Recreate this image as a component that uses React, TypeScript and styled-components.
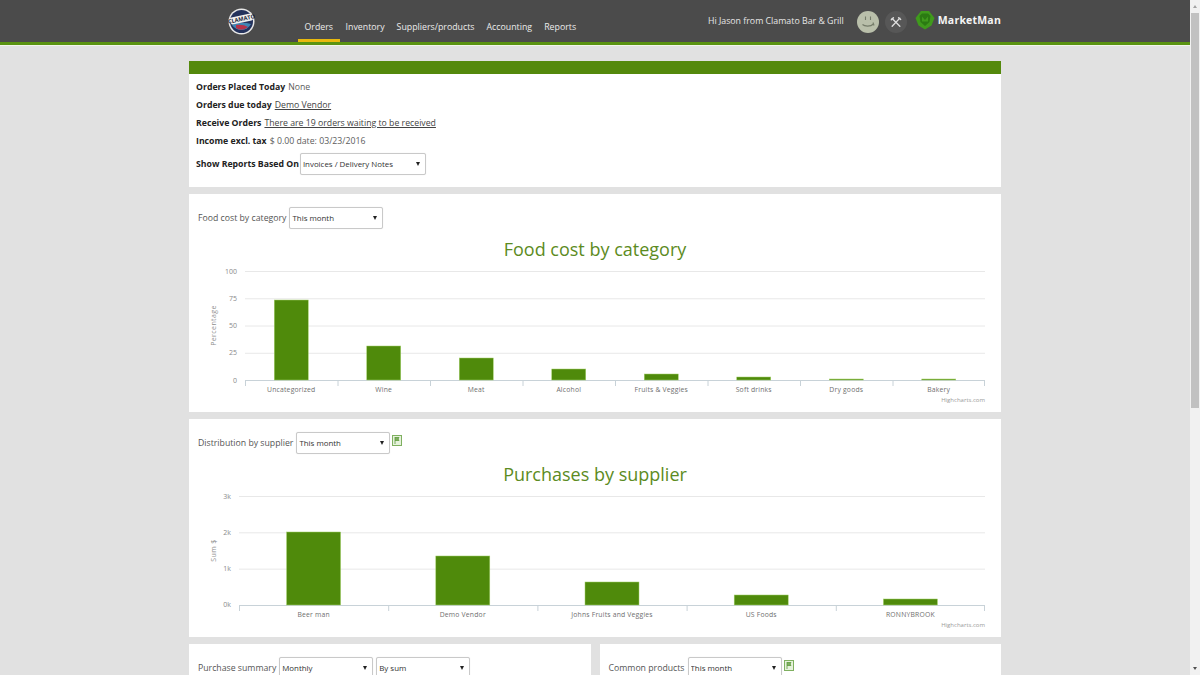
import React from 'react';
import styled, { createGlobalStyle } from 'styled-components';

const GlobalStyle = createGlobalStyle`
  html, body {
    margin: 0;
    padding: 0;
    height: 100%;
    overflow: hidden;
    background: #e1e1e1;
    font-family: "Open Sans", "Liberation Sans", sans-serif;
  }
  * { box-sizing: border-box; }
`;

const Page = styled.div`
  display: flex;
  width: 1200px;
  height: 675px;
  overflow: hidden;
`;

const Main = styled.div`
  flex: 1;
  min-width: 0;
`;

const Header = styled.header`
  height: 45px;
  background: #4b4b4b;
  border-bottom: 3px solid #5a9311;
  box-shadow: 0 1px 0 #f2f5ea;
`;

const HeaderInner = styled.div`
  width: 812px;
  height: 42px;
  margin: 0 auto;
  display: flex;
  align-items: stretch;
  padding-left: 39px;
`;

const LogoSlot = styled.div`
  width: 70px;
  display: flex;
  align-items: flex-start;
  padding-top: 8px;
`;

const Nav = styled.nav`
  display: flex;
`;

const NavItem = styled.a<{ $active?: boolean }>`
  display: flex;
  align-items: center;
  height: 42px;
  padding: 14px ${p => (p.$active ? '6.500px' : '6px')} 0;
  font-size: 8.8px;
  color: #ececec;
  border-bottom: 3px solid ${p => (p.$active ? '#e8b90e' : 'transparent')};
`;

const UserArea = styled.div`
  margin-left: auto;
  display: flex;
  align-items: center;
  height: 42px;
  padding-top: 1px;
`;

const Greeting = styled.span`
  font-size: 8.8px;
  color: #e6e6e6;
  margin: -1px 13px 0 0;
`;

const IconRound = styled.span<{ $bg: string }>`
  width: 22px;
  height: 22px;
  border-radius: 50%;
  background: ${p => p.$bg};
  display: flex;
  align-items: center;
  justify-content: center;
  margin-right: 6px;
`;

const Brand = styled.span`
  display: flex;
  align-items: center;
  gap: 3px;
  margin-left: 2px;
  margin-top: -4px;
  font-size: 10.500px;
  font-weight: 700;
  letter-spacing: 0.2px;
  color: #f4f4f4;
`;

const Content = styled.main`
  width: 812px;
  margin: 0 auto;
  padding-top: 16px;
  display: flex;
  flex-direction: column;
  gap: 7px;
`;

const Card = styled.section`
  background: #fff;
  font-size: 8.72px;
  color: #555;
`;

const GreenBar = styled.div`
  height: 13px;
  background: #54890c;
`;

const SummaryBody = styled.div`
  padding: 4px 7px 12px;
`;

const SummaryRow = styled.div`
  height: 18px;
  display: flex;
  align-items: center;
  gap: 3px;
  color: #5d5d5d;
  white-space: nowrap;
`;

const SummaryFilter = styled(SummaryRow)`
  height: 22px;
  margin-top: 3px;
  gap: 1px;
`;

const Strong = styled.b`
  color: #222;
  font-weight: 700;
`;

const Link = styled.a`
  color: #444;
  text-decoration: underline;
`;

const Toolbar = styled.div`
  display: flex;
  align-items: center;
  gap: 3px;
  height: 22px;
  margin: 13px 0 4px;
  padding-left: 9px;
  white-space: nowrap;
`;

const SelectBox = styled.span<{ $width: number }>`
  position: relative;
  display: inline-block;
  width: ${p => p.$width}px;
  height: 22px;
  flex: none;

  &::after {
    content: '';
    position: absolute;
    top: 9px;
    right: 6px;
    border-left: 2.500px solid transparent;
    border-right: 2.500px solid transparent;
    border-top: 4px solid #222;
    pointer-events: none;
  }
`;

const Select = styled.select`
  appearance: none;
  width: 100%;
  height: 100%;
  padding: 0 0 0 2px;
  font-family: inherit;
  font-size: 7.9px;
  color: #333;
  background: #fff;
  border: 1px solid #c9c9c9;
  border-radius: 2px;
  box-shadow: 0 0 1px #ddd;
`;

const ExportSlot = styled.span`
  display: flex;
  margin: -6px 0 0 -1px;
`;

const ChartSvg = styled.svg`
  display: block;
  font-family: "Open Sans", "Liberation Sans", sans-serif;
`;

const ChartTitle = styled.text`
  font-size: 18px;
  fill: #5c8b22;
  text-anchor: middle;
`;

const AxisLabel = styled.text`
  font-size: 7px;
  fill: #8a8a8a;
  text-anchor: end;
`;

const CategoryLabel = styled.text`
  font-size: 6.800px;
  letter-spacing: 0.2px;
  fill: #6f6f6f;
  text-anchor: middle;
`;

const AxisTitle = styled.text`
  font-size: 7px;
  letter-spacing: 0.4px;
  fill: #8f8f8f;
  text-anchor: middle;
`;

const Credit = styled.text`
  font-size: 6px;
  fill: #9a9a9a;
  text-anchor: end;
`;

const BottomRow = styled.div`
  display: flex;
  gap: 9px;
`;

const HalfCard = styled(Card)`
  flex: 1;
  height: 80px;
`;

const Scrollbar = styled.aside`
  width: 10px;
  height: 675px;
  background: #f1f1f1;
  display: flex;
  flex-direction: column;
  align-items: center;
  padding: 0 1px;
`;

const ScrollArrow = styled.span<{ $down?: boolean }>`
  flex: none;
  margin: 5px 0;
  border-left: 2.500px solid transparent;
  border-right: 2.500px solid transparent;
  ${p => (p.$down ? 'border-top: 3px solid #505050;' : 'border-bottom: 3px solid #a3a3a3;')}
`;

const ScrollThumb = styled.span`
  width: 8px;
  height: 395px;
  background: #c1c1c1;
`;

const ScrollTrack = styled.span`
  flex: 1;
`;

const ClamatoLogo = () => (
  <svg width="27" height="27" viewBox="0 0 27 27">
    <circle cx="13.500" cy="13.500" r="13" fill="#e8e8e8" />
    <circle cx="13.500" cy="13.500" r="11.500" fill="#24325c" />
    <path d="M4 17 Q13 13 23 16 A11 11 0 0 1 4 17Z" fill="#3f86b5" />
    <path d="M8 17 Q15 16 20 19 Q14 24 8 20Z" fill="#b6324a" />
    <g transform="rotate(-12 13.500 11)">
      <rect x="2" y="7.500" width="23" height="7" rx="2" fill="#f1f1f1" />
      <text x="13.500" y="13" fontSize="5.600" fontWeight="700" fill="#1a1f3a" textAnchor="middle">CLAMATO</text>
    </g>
  </svg>
);

const SmileIcon = () => (
  <svg width="20" height="20" viewBox="0 0 20 20" fill="none" stroke="#747b69" strokeWidth="1.100">
    <path d="M7.500 4.500v3.500M12.500 4.500v3.500" />
    <path d="M4.500 12.500c2 2 8 2.500 11-.5" />
    <path d="M15 10.500l1 3" />
  </svg>
);

const ToolsIcon = () => (
  <svg width="12" height="12" viewBox="0 0 14 14" fill="none" stroke="#dedede" strokeWidth="1.600" strokeLinecap="round">
    <path d="M2.500 3l9 9" />
    <path d="M11.500 2.500l-9 9.500" />
    <path d="M1.500 4.500l2.500-2.500" />
    <path d="M10 2l2.500 2" />
  </svg>
);

const BrandGem = () => (
  <svg width="20" height="20" viewBox="0 0 20 20">
    <path d="M6 1h8l5.500 7-3 7.500L10 19.500 3.500 15.500 .5 8z" fill="#3f9a1c" />
    <path d="M4.500 6L7 3.500h6L15.500 6l-1 6L10 16l-4.500-4z" fill="#2b7a12" />
    <path d="M7 6.500l3 3.500 3-3.500v5H7z" fill="#3f9a1c" />
  </svg>
);

const ExportIcon = () => (
  <svg width="10" height="11" viewBox="0 0 10 11">
    <rect x="0.500" y="0.500" width="9" height="10" fill="#e6f2dc" stroke="#7fb060" />
    <path d="M3 2v7M3 2.500h4l-1 1.500 1 1.500H3" fill="#7fb060" stroke="#5e9a3c" strokeWidth="0.800" />
  </svg>
);

type ChartProps = {
  title: string;
  axisTitle: string;
  height: number;
  titleY: number;
  left: number;
  right: number;
  gridTop: number;
  gridStep: number;
  ticks: string[];
  barWidth: number;
  bars: { label: string; height: number }[];
};

const BarChart = ({ title, axisTitle, height, titleY, left, right, gridTop, gridStep, ticks, barWidth, bars }: ChartProps) => {
  const base = gridTop + gridStep * (ticks.length - 1);
  const band = (right - left) / bars.length;
  const axisMid = (gridTop + base) / 2;
  return (
    <ChartSvg width="812" height={height} viewBox={`0 0 812 ${height}`}>
      <ChartTitle x="406" y={titleY}>{title}</ChartTitle>
      {ticks.map((t, i) => {
        const y = gridTop + gridStep * i;
        return (
          <g key={t}>
            <line x1={left} x2={right} y1={y + 0.5} y2={y + 0.5} stroke={i === ticks.length - 1 ? '#c8d2d8' : '#e8e8e8'} />
            <AxisLabel x={left - 8} y={y + 2.5}>{t}</AxisLabel>
          </g>
        );
      })}
      <AxisTitle x="27" y={axisMid} transform={`rotate(-90 27 ${axisMid})`}>{axisTitle}</AxisTitle>
      {bars.map((b, i) => {
        const cx = left + band * (i + 0.5);
        return (
          <g key={b.label}>
            <rect x={cx - barWidth / 2} y={base - b.height} width={barWidth} height={b.height} fill="#4f8a0b" stroke="#a3d06a" strokeWidth="0.5" />
            <line x1={left + band * i + 0.5} x2={left + band * i + 0.5} y1={base} y2={base + 6} stroke="#c8d2d8" />
            <CategoryLabel x={cx} y={base + 12}>{b.label}</CategoryLabel>
          </g>
        );
      })}
      <line x1={right - 0.5} x2={right - 0.5} y1={base} y2={base + 6} stroke="#c8d2d8" />
      <Credit x={right} y={base + 22}>Highcharts.com</Credit>
    </ChartSvg>
  );
};

const Dropdown = ({ value, width }: { value: string; width: number }) => (
  <SelectBox $width={width}>
    <Select defaultValue={value}>
      <option>{value}</option>
    </Select>
  </SelectBox>
);

const navItems = ['Inventory', 'Suppliers/products', 'Accounting', 'Reports'];

const categoryBars = [
  { label: 'Uncategorized', height: 80 },
  { label: 'Wine', height: 34 },
  { label: 'Meat', height: 22 },
  { label: 'Alcohol', height: 11 },
  { label: 'Fruits & Veggies', height: 6 },
  { label: 'Soft drinks', height: 3 },
  { label: 'Dry goods', height: 1 },
  { label: 'Bakery', height: 1 },
];

const supplierBars = [
  { label: 'Beer man', height: 73 },
  { label: 'Demo Vendor', height: 49 },
  { label: 'Johns Fruits and Veggies', height: 23 },
  { label: 'US Foods', height: 10 },
  { label: 'RONNYBROOK', height: 6 },
];

export default function App() {
  return (
    <Page>
      <GlobalStyle />
      <Main>
        <Header>
          <HeaderInner>
            <LogoSlot>
              <ClamatoLogo />
            </LogoSlot>
            <Nav>
              <NavItem $active>Orders</NavItem>
              {navItems.map(item => (
                <NavItem key={item}>{item}</NavItem>
              ))}
            </Nav>
            <UserArea>
              <Greeting>Hi Jason from Clamato Bar &amp; Grill</Greeting>
              <IconRound $bg="#b9bfaa">
                <SmileIcon />
              </IconRound>
              <IconRound $bg="#575757">
                <ToolsIcon />
              </IconRound>
              <Brand>
                <BrandGem />
                MarketMan
              </Brand>
            </UserArea>
          </HeaderInner>
        </Header>

        <Content>
          <Card>
            <GreenBar />
            <SummaryBody>
              <SummaryRow>
                <Strong>Orders Placed Today</Strong> None
              </SummaryRow>
              <SummaryRow>
                <Strong>Orders due today</Strong> <Link>Demo Vendor</Link>
              </SummaryRow>
              <SummaryRow>
                <Strong>Receive Orders</Strong> <Link>There are 19 orders waiting to be received</Link>
              </SummaryRow>
              <SummaryRow>
                <Strong>Income excl. tax</Strong> $ 0.00 date: 03/23/2016
              </SummaryRow>
              <SummaryFilter>
                <Strong>Show Reports Based On</Strong>
                <Dropdown value="Invoices / Delivery Notes" width={126} />
              </SummaryFilter>
            </SummaryBody>
          </Card>

          <Card>
            <Toolbar>
              Food cost by category
              <Dropdown value="This month" width={94} />
            </Toolbar>
            <BarChart
              title="Food cost by category"
              axisTitle="Percentage"
              height={179}
              titleY={23}
              left={56}
              right={796}
              gridTop={38}
              gridStep={27.25}
              ticks={['100', '75', '50', '25', '0']}
              barWidth={34}
              bars={categoryBars}
            />
          </Card>

          <Card>
            <Toolbar>
              Distribution by supplier
              <Dropdown value="This month" width={94} />
              <ExportSlot>
                <ExportIcon />
              </ExportSlot>
            </Toolbar>
            <BarChart
              title="Purchases by supplier"
              axisTitle="Sum $"
              height={179}
              titleY={23}
              left={50}
              right={796}
              gridTop={38}
              gridStep={36.33}
              ticks={['3k', '2k', '1k', '0k']}
              barWidth={54}
              bars={supplierBars}
            />
          </Card>

          <BottomRow>
            <HalfCard>
              <Toolbar>
                Purchase summary
                <Dropdown value="Monthly" width={94} />
                <Dropdown value="By sum" width={94} />
              </Toolbar>
            </HalfCard>
            <HalfCard>
              <Toolbar>
                Common products
                <Dropdown value="This month" width={94} />
                <ExportSlot>
                  <ExportIcon />
                </ExportSlot>
              </Toolbar>
            </HalfCard>
          </BottomRow>
        </Content>
      </Main>
      <Scrollbar>
        <ScrollArrow />
        <ScrollThumb />
        <ScrollTrack />
        <ScrollArrow $down />
      </Scrollbar>
    </Page>
  );
}
